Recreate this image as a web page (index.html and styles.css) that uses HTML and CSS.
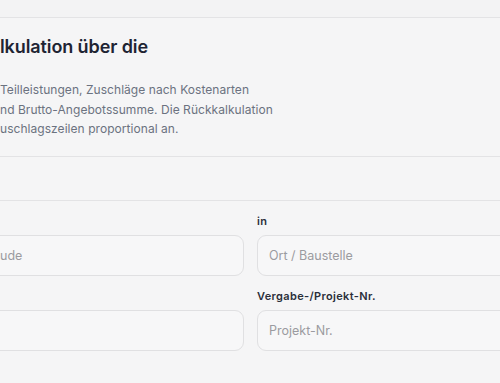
FILE: index.html
```html
<!DOCTYPE html>
<html lang="de">
<head>
  <meta charset="UTF-8">
  <title>Rückkalkulation</title>
  <link rel="stylesheet" href="styles.css">
</head>
<body>
  <!-- Toolbar strip -->
  <div class="topbar"></div>

  <main class="panel">
    <!-- Intro -->
    <section class="intro">
      <h1 class="intro-title">lkulation über die</h1>
      <p class="intro-text">
        Teilleistungen, Zuschläge nach Kostenarten<br>
        nd Brutto-Angebotssumme. Die Rückkalkulation<br>
        uschlagszeilen proportional an.
      </p>
    </section>

    <!-- Section band -->
    <div class="band"></div>

    <!-- Form -->
    <section class="form-grid">
      <div class="field">
        <label class="field-label"></label>
        <input class="field-input" type="text" placeholder="ude">
      </div>
      <div class="field">
        <label class="field-label">in</label>
        <input class="field-input" type="text" placeholder="Ort / Baustelle">
      </div>
      <div class="field">
        <label class="field-label"></label>
        <input class="field-input" type="text">
      </div>
      <div class="field">
        <label class="field-label">Vergabe-/Projekt-Nr.</label>
        <input class="field-input" type="text" placeholder="Projekt-Nr.">
      </div>
    </section>
  </main>
</body>
</html>
```

FILE: styles.css
```css
:root {
  --bg: #f5f5f6;
  --bar: #f3f3f4;
  --line: #e3e3e5;
  --ink: #1e2433;
  --muted: #6b7280;
  --hint: #9b9ba0;
}

* {
  margin: 0;
  padding: 0;
  box-sizing: border-box;
}

body {
  font-family: Inter, 'Liberation Sans', sans-serif;
  background-color: var(--bg);
  color: var(--ink);
  overflow: hidden;
}

.topbar {
  height: 18px;
  background-color: var(--bar);
  border-bottom: 1px solid var(--line);
}

.intro {
  padding: 17px 0 17px;
  border-bottom: 1px solid var(--line);
}

.intro-title {
  font-size: 18px;
  font-weight: 600;
  line-height: 24px;
  letter-spacing: -0.1px;
  margin-bottom: 21px;
}

.intro-text {
  font-size: 12px;
  line-height: 19.5px;
  letter-spacing: 0.05px;
  color: var(--muted);
}

.band {
  height: 44px;
  border-bottom: 1px solid var(--line);
}

.form-grid {
  display: grid;
  grid-template-columns: 256px 256px;
  column-gap: 13px;
  row-gap: 13px;
  margin-left: -12px;
  padding: 13px 0;
}

.field {
  display: flex;
  flex-direction: column;
  gap: 7px;
}

.field-label {
  min-height: 14px;
  font-size: 11px;
  font-weight: 600;
  line-height: 14px;
  letter-spacing: 0.35px;
  color: #2a2f3a;
}

.field-input {
  height: 41px;
  padding: 0 11px;
  font-family: inherit;
  font-size: 12.5px;
  color: var(--ink);
  background-color: #f7f7f8;
  border: 1px solid #e0e0e2;
  border-radius: 9px;
}

.field-input::placeholder {
  color: var(--hint);
}
```
